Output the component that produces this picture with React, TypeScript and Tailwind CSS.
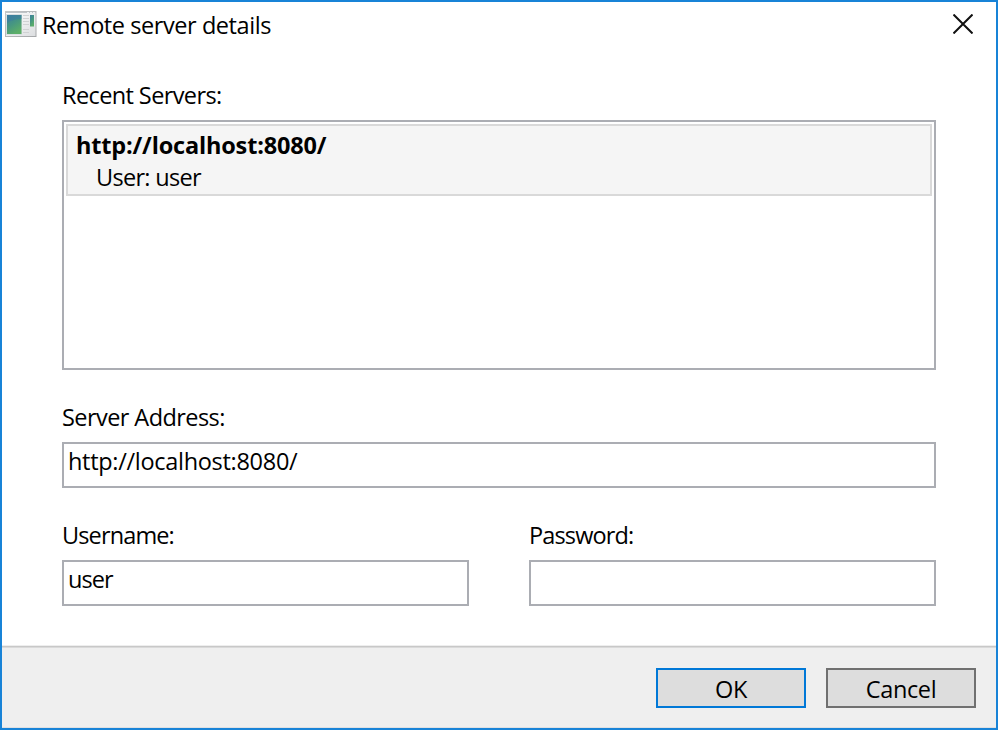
import React from 'react';

function AppIcon() {
  return (
    <svg width="32" height="26" viewBox="0 0 32 26" className="block shrink-0">
      <defs>
        <linearGradient id="frame" x1="0" y1="0" x2="1" y2="1">
          <stop offset="0" stopColor="#c4c7c8" />
          <stop offset="1" stopColor="#a5a7a9" />
        </linearGradient>
        <linearGradient id="body" x1="0" y1="0" x2="1" y2="1">
          <stop offset="0" stopColor="#ffffff" />
          <stop offset="1" stopColor="#dcdee0" />
        </linearGradient>
        <linearGradient id="pane" x1="0" y1="0" x2="0.5" y2="1">
          <stop offset="0" stopColor="#3f7f9f" />
          <stop offset="0.5" stopColor="#459583" />
          <stop offset="1" stopColor="#5cae68" />
        </linearGradient>
      </defs>
      <rect x="0.5" y="0.5" width="30.500" height="25" fill="url(#body)" stroke="url(#frame)" />
      <path d="M1 1.5H31" stroke="#bfc4c8" />
      <path d="M22 1.5h2M25 1.5h2M28 1.5h2" stroke="#eef1f3" />
      <rect x="1.5" y="3.5" width="15" height="20" fill="#e6ecee" stroke="#d9dfe1" />
      <rect x="2" y="4" width="14.500" height="19" fill="url(#pane)" />
      <path d="M2 12C6 9 11 8 16.500 8V4H2Z" fill="#3979a6" opacity="0.5" />
      <path d="M18 4.500h6M18 7.500h6M18 10.500h6M18 13.500h6M18 18.500h6M18 21.500h6" stroke="#d0d2d3" />
      <rect x="25" y="4" width="4" height="11.500" fill="url(#pane)" />
    </svg>
  );
}

function Field({ label, value, labelClass, valueClass }: { label: string; value: string; labelClass: string; valueClass: string }) {
  return (
    <div className="flex min-w-0 flex-1 flex-col gap-[9px]">
      <div className="h-8"><span className={labelClass}>{label}</span></div>
      <div className="h-[46px] border-2 border-[#abadb3] bg-white pt-px pl-[4px]">
        <span className={valueClass}>{value}</span>
      </div>
    </div>
  );
}

export default function App() {
  return (
    <div className="flex h-[730px] w-[998px] flex-col overflow-hidden border-2 border-[#1883d7] bg-white font-['Open_Sans','Noto_Sans',sans-serif] text-[23.5px] leading-8 whitespace-nowrap text-black">
      <header className="flex h-[77px] items-start pt-[7px] pr-[23px] pl-[3px]">
        <div className="mt-[2px]"><AppIcon /></div>
        <span className="ml-[5px] tracking-[-0.43px]">Remote server details</span>
        <svg width="20" height="20" viewBox="0 0 20 20" className="mt-[5px] ml-auto block">
          <path d="M0.5 0.5L19.500 19.500M19.500 0.500L0.500 19.500" stroke="#111" strokeWidth="2" />
        </svg>
      </header>

      <main className="flex flex-1 flex-col px-[60px]">
        <div className="h-8"><span className="tracking-[-0.6px]">Recent Servers:</span></div>
        <div className="mt-[9px] h-[250px] border-2 border-[#abadb3] p-[2px]">
          <div className="h-[72px] border-2 border-[#d9d9d9] bg-[#f5f5f5] pt-[3px] pl-[8px]">
            <div className="font-bold tracking-[-0.17px]">http://localhost:8080/</div>
            <div className="pl-5 tracking-[-0.7px]">User: user</div>
          </div>
        </div>
        <div className="mt-[31px] flex">
          <Field label="Server Address:" value="http://localhost:8080/" labelClass="tracking-[-0.57px]" valueClass="tracking-[-0.3px]" />
        </div>
        <div className="mt-[31px] flex gap-[60px]">
          <Field label="Username:" value="user" labelClass="tracking-[-0.87px]" valueClass="tracking-[-0.9px]" />
          <Field label="Password:" value="" labelClass="tracking-[-0.85px]" valueClass="tracking-[-0.3px]" />
        </div>
      </main>

      <footer className="flex h-[83px] shrink-0 flex-col border-t border-b border-t-[#eeeeee] border-b-[#dfe0e2] bg-[#efefef]">
        <div className="h-px bg-[#c8c8c8]" />
        <div className="h-px bg-[#dadada]" />
        <div className="flex justify-end gap-5 pt-5 pr-5">
          <button className="flex h-10 w-[150px] justify-center border-2 border-[#0078d7] bg-[#dddddd] pt-[3px] tracking-[-0.3px]">OK</button>
          <button className="flex h-10 w-[150px] justify-center border-2 border-[#707070] bg-[#dddddd] pt-[3px] tracking-[-0.35px]">Cancel</button>
        </div>
      </footer>
    </div>
  );
}
